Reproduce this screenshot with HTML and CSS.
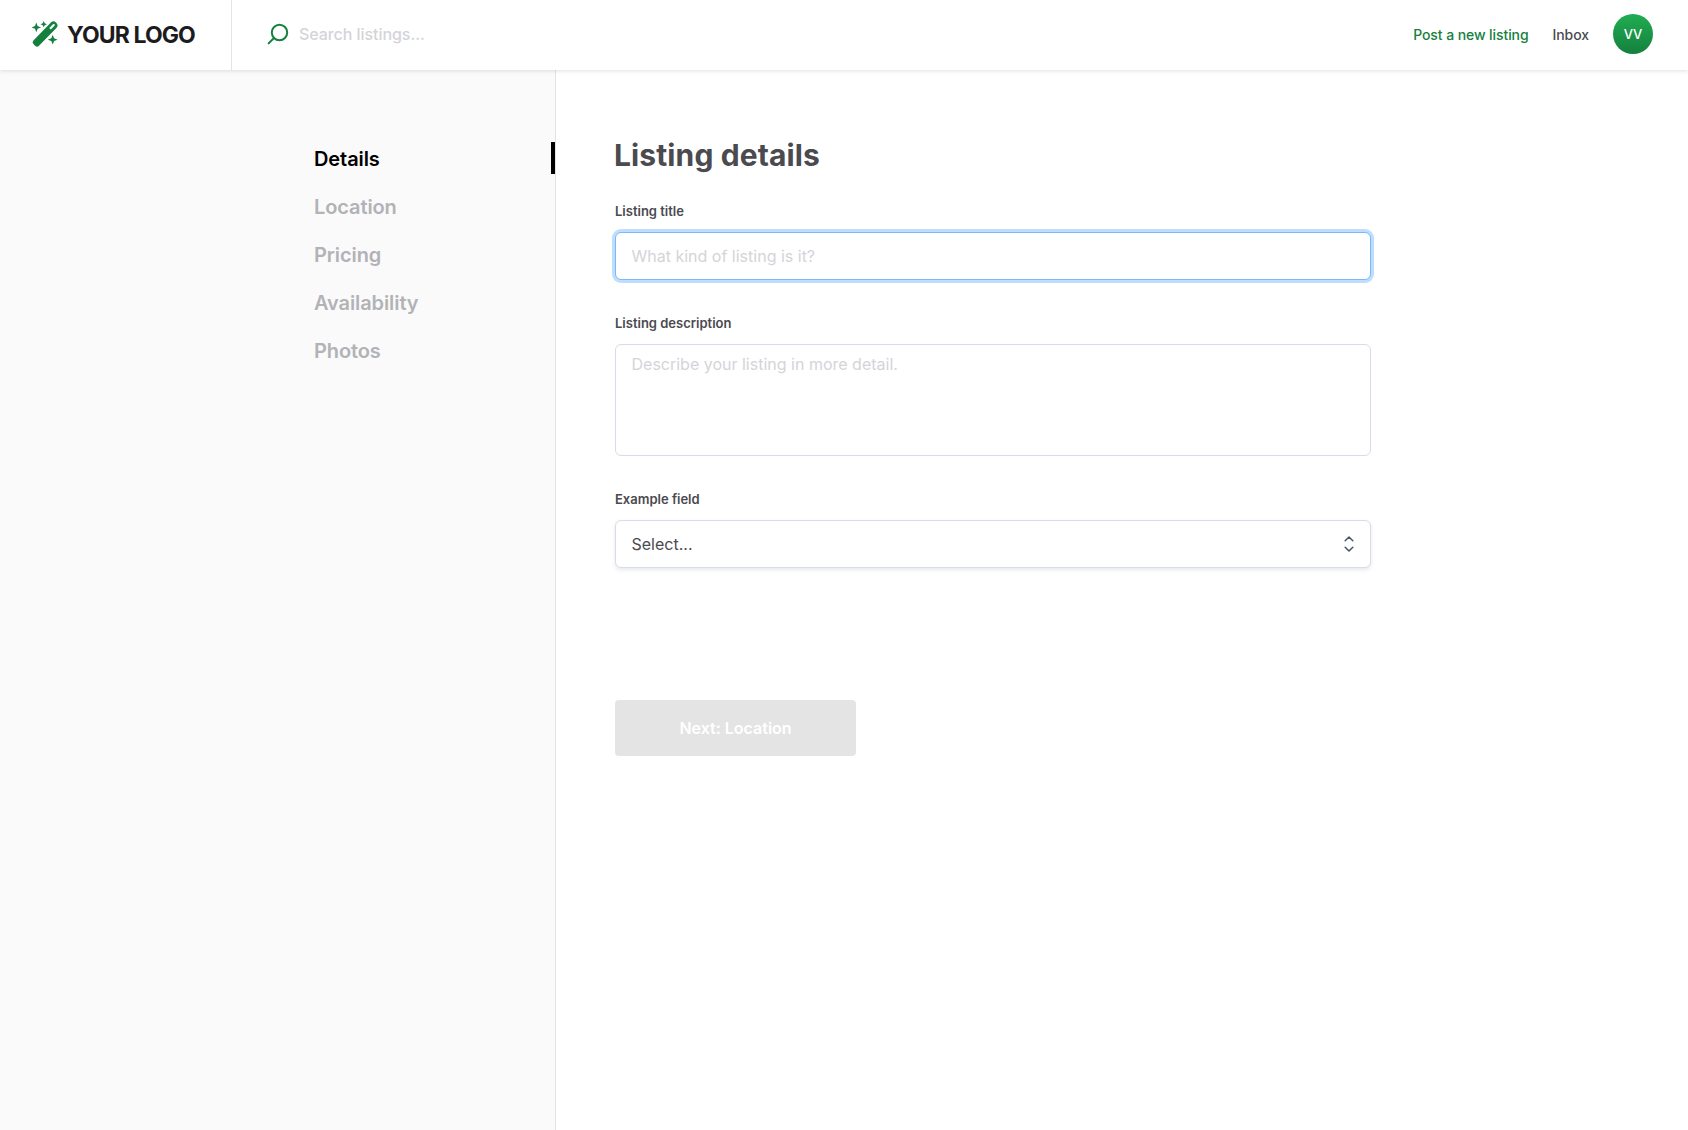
FILE: index.html
```html
<!DOCTYPE html>
<html lang="en">
<head>
<meta charset="utf-8">
<title>Listing details</title>
<link rel="stylesheet" href="styles.css">
</head>
<body>
<header class="topbar">
  <a class="logo">
    <svg class="logo-icon" width="26" height="26" viewBox="0 0 26 26" fill="#15803d">
      <path fill-rule="evenodd" d="M1.400 19.600 18.900 1.500a3.500 3.500 0 0 1 5 0l.5.5a3.500 3.500 0 0 1 0 4.900L7 24.700a2.700 2.700 0 0 1-3.900 0l-1.700-1.700a2.400 2.400 0 0 1 0-3.400ZM17.300 7l1.500 1.500 3.700-3.700a1.060 1.060 0 0 0-1.500-1.500Z"/>
      <path d="M4.300 1.600 5.600 5.100 9 6.400 5.600 7.700 4.300 11.200 3 7.700-.4 6.400 3 5.100ZM11.700.1l1 2.100 2.200 1-2.200 1-1 2.100-1-2.100-2.200-1 2.200-1ZM20.700 13.800l1.400 3.500 3.500 1.400-3.500 1.400-1.400 3.500-1.400-3.500-3.500-1.400 3.500-1.400Z"/>
    </svg>
    <span class="logo-text">YOUR LOGO</span>
  </a>
  <div class="search">
    <svg class="search-icon" width="22" height="22" viewBox="0 0 22 22" fill="none" stroke="#15803d" stroke-width="2" stroke-linecap="round">
      <circle cx="12.500" cy="9.500" r="7.700"/><path d="M7 15 1.600 20.400"/>
    </svg>
    <input class="search-input" type="text" placeholder="Search listings...">
  </div>
  <nav class="links">
    <a class="link link-primary">Post a new listing</a>
    <a class="link">Inbox</a>
    <span class="avatar">VV</span>
  </nav>
</header>
<div class="layout">
  <aside class="sidebar">
    <ul class="steps">
      <li class="step step-active">Details</li>
      <li class="step">Location</li>
      <li class="step">Pricing</li>
      <li class="step">Availability</li>
      <li class="step">Photos</li>
    </ul>
  </aside>
  <main class="content">
    <h1 class="title">Listing details</h1>
    <form class="form">
      <div class="field">
        <label class="label">Listing title</label>
        <input class="control control-focused" type="text" placeholder="What kind of listing is it?">
      </div>
      <div class="field">
        <label class="label">Listing description</label>
        <textarea class="control control-area" placeholder="Describe your listing in more detail."></textarea>
      </div>
      <div class="field">
        <label class="label">Example field</label>
        <div class="control control-select">
          <span>Select...</span>
          <svg width="10" height="16" viewBox="0 0 10 16" fill="none" stroke="#475569" stroke-width="1.500" stroke-linecap="round" stroke-linejoin="round"><path d="M1.200 4.800 5 1l3.800 3.800M1.200 11.200 5 15l3.800-3.800"/></svg>
        </div>
      </div>
      <button class="next" type="button">Next: Location</button>
    </form>
  </main>
</div>
</body>
</html>
```

FILE: styles.css
```css
* { box-sizing: border-box; }

body {
  margin: 0;
  height: 1130px;
  display: flex;
  flex-direction: column;
  font-family: Inter, "Liberation Sans", sans-serif;
  color: #4a4a4f;
  background: #fff;
}

input, textarea, button { font-family: inherit; }

.topbar {
  height: 70px;
  flex: none;
  display: flex;
  position: relative;
  background: #fff;
  box-shadow: 0 1px 4px rgba(0, 0, 0, 0.12);
}

.logo {
  width: 232px;
  padding-left: 32px;
  display: flex;
  align-items: center;
  gap: 9px;
  border-right: 1px solid #e4e4e7;
}

.logo-icon { flex: none; margin-bottom: 3px; overflow: visible; }

.logo-text {
  font-size: 23px;
  line-height: 28px;
  font-weight: 700;
  letter-spacing: -0.9px;
  color: #1c1c1f;
  white-space: nowrap;
}

.search {
  flex: 1;
  display: flex;
  align-items: center;
  gap: 10px;
  padding: 0 0 2px 35px;
}

.search-input {
  flex: 1;
  border: 0;
  padding: 0;
  outline: 0;
  font-size: 16px;
  line-height: 24px;
  font-weight: 500;
  letter-spacing: -0.06px;
}

::placeholder { color: #d4d4d8; opacity: 1; }

.links {
  display: flex;
  align-items: center;
  gap: 24px;
  padding: 0 35px 2px 0;
}

.link {
  font-size: 14px;
  line-height: 20px;
  font-weight: 500;
  letter-spacing: -0.08px;
  padding-top: 2px;
}

.link-primary { color: #15803d; }

.avatar {
  width: 40px;
  height: 40px;
  border-radius: 50%;
  display: flex;
  align-items: center;
  justify-content: center;
  color: #fff;
  font-size: 13px;
  font-weight: 500;
  background: linear-gradient(#20ad52, #15803d);
}

.layout { flex: 1; display: flex; }

.sidebar {
  width: 556px;
  flex: none;
  padding: 72px 0 0 314px;
  background: #fafafa;
  border-right: 1px solid #e4e4e7;
}

.steps {
  list-style: none;
  margin: 0;
  padding: 0;
  display: flex;
  flex-direction: column;
  gap: 16px;
}

.step {
  height: 32px;
  padding-top: 1px;
  font-size: 20px;
  line-height: 32px;
  font-weight: 600;
  letter-spacing: -0.1px;
  color: #b2b2b7;
}

.step-active {
  color: #000;
  border-right: 4px solid #000;
}

.content { padding: 67px 0 0 59px; }

.title {
  margin: 0 0 28px -1px;
  font-size: 30px;
  line-height: 36px;
  font-weight: 700;
  letter-spacing: 0.12px;
}

.form { width: 756px; }

.field {
  display: flex;
  flex-direction: column;
  gap: 11px;
  margin-bottom: 33px;
}

.label {
  font-size: 13px;
  line-height: 20px;
  font-weight: 600;
}

.control {
  height: 48px;
  border: 1px solid #d9dbe8;
  border-radius: 6px;
  padding: 0 16px 0 15.5px;
  font-size: 16px;
  line-height: 24px;
  background: #fff;
  outline: 0;
}

.control-focused {
  border-color: #7ab8fb;
  box-shadow: 0 0 0 3px #bfddfe;
}

.control-area {
  height: 112px;
  padding-top: 7px;
  resize: none;
}

.control-select {
  display: flex;
  align-items: center;
  justify-content: space-between;
  box-shadow: 0 2px 4px rgba(60, 66, 110, 0.12);
}

.next {
  width: 241px;
  height: 56px;
  margin-top: 99px;
  border: 0;
  border-radius: 4px;
  background: #e4e4e4;
  color: #fff;
  font-size: 16px;
  font-weight: 600;
}
```
